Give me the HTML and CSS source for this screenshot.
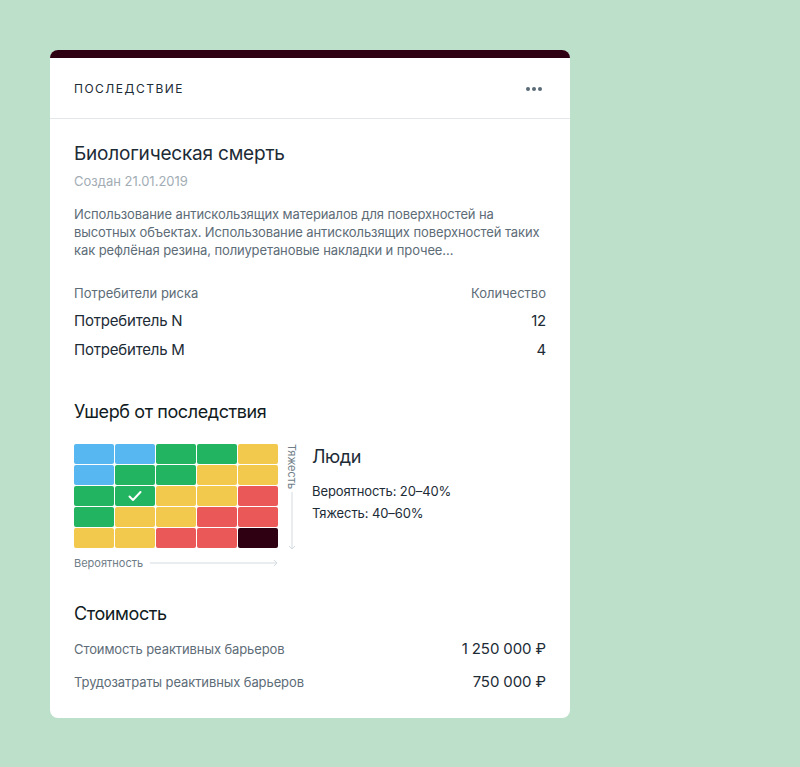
FILE: index.html
```html
<!DOCTYPE html>
<html lang="ru">
<head>
    <meta charset="UTF-8">
    <title>Последствие</title>
    <link rel="stylesheet" href="styles.css">
</head>
<body>
    <div class="card">
        <div class="card-top"></div>
        <div class="card-header">
            <span class="card-label">Последствие</span>
            <span class="dots"><i></i><i></i><i></i></span>
        </div>

        <div class="card-body">
            <h1 class="title">Биологическая смерть</h1>
            <div class="created">Создан 21.01.2019</div>
            <p class="desc">Использование антискользящих материалов для поверхностей на высотных объектах. Использование антискользящих поверхностей таких как рефлёная резина, полиуретановые накладки и прочее...</p>

            <div class="consumers">
                <div class="row head">
                    <span>Потребители риска</span>
                    <span>Количество</span>
                </div>
                <div class="row">
                    <span>Потребитель N</span>
                    <span>12</span>
                </div>
                <div class="row">
                    <span>Потребитель M</span>
                    <span>4</span>
                </div>
            </div>

            <h2 class="subtitle">Ушерб от последствия</h2>
            <div class="damage">
                <div class="matrix-wrap">
                    <div class="matrix-row">
                        <div class="matrix">
                            <div class="c blue"></div><div class="c blue"></div><div class="c green"></div><div class="c green"></div><div class="c yellow"></div>
                            <div class="c blue"></div><div class="c green"></div><div class="c green"></div><div class="c yellow"></div><div class="c yellow"></div>
                            <div class="c green"></div><div class="c green checked"><svg width="14" height="12" viewBox="0 0 14 12"><path d="M1.5 6.5 L5 10 L12.5 2" fill="none" stroke="#fff" stroke-width="2" stroke-linecap="round" stroke-linejoin="round"/></svg></div><div class="c yellow"></div><div class="c yellow"></div><div class="c red"></div>
                            <div class="c green"></div><div class="c yellow"></div><div class="c yellow"></div><div class="c red"></div><div class="c red"></div>
                            <div class="c yellow"></div><div class="c yellow"></div><div class="c red"></div><div class="c red"></div><div class="c dark"></div>
                        </div>
                        <div class="axis-y">
                            <span class="axis-y-label">Тяжесть</span>
                            <svg class="axis-y-arrow" width="8" height="58" viewBox="0 0 8 58"><path d="M4 0 V57 M1 54 L4 57 L7 54" fill="none" stroke="#d3dbe1" stroke-width="1"/></svg>
                        </div>
                    </div>
                    <div class="axis-x">
                        <span>Вероятность</span>
                        <svg class="axis-x-arrow" width="128" height="8" viewBox="0 0 128 8"><path d="M0 4 H127 M124 1 L127 4 L124 7" fill="none" stroke="#d3dbe1" stroke-width="1"/></svg>
                    </div>
                </div>
                <div class="people">
                    <div class="people-title">Люди</div>
                    <div class="people-line">Вероятность: 20–40%</div>
                    <div class="people-line">Тяжесть: 40–60%</div>
                </div>
            </div>

            <h2 class="subtitle cost-title">Стоимость</h2>
            <div class="cost">
                <div class="cost-row">
                    <span>Стоимость реактивных барьеров</span>
                    <span class="sum">1 250 000 ₽</span>
                </div>
                <div class="cost-row">
                    <span>Трудозатраты реактивных барьеров</span>
                    <span class="sum">750 000 ₽</span>
                </div>
            </div>
        </div>
    </div>
</body>
</html>
```

FILE: styles.css
```css
/* Общие стили */
body {
    margin: 0;
    background-color: #bde0cb;
    font-family: Inter, "Noto Sans", sans-serif;
    color: #1c2b36;
    min-height: 767px;
}

.card {
    width: 520px;
    margin: 50px 0 0 50px;
    background-color: #fff;
    border-radius: 8px;
    overflow: hidden;
}

.card-top {
    height: 8px;
    background-color: #2e0011;
}

/* Шапка карточки */
.card-header {
    height: 60px;
    padding: 0 24px;
    display: flex;
    align-items: center;
    justify-content: space-between;
    border-bottom: 1px solid #e3e7ea;
}

.card-label {
    font-size: 12px;
    letter-spacing: 1.5px;
    text-transform: uppercase;
    color: #1c2b36;
    padding-top: 1px;
}

.dots {
    display: flex;
    gap: 2px;
    margin-right: 4px;
    padding-top: 1px;
}

.dots i {
    width: 4px;
    height: 4px;
    border-radius: 50%;
    background-color: #5a6b78;
}

/* Содержимое */
.card-body {
    padding: 23px 24px 20px;
}

.title {
    margin: 0;
    font-size: 19px;
    font-weight: 400;
    line-height: 24px;
    letter-spacing: -0.2px;
}

.created {
    margin-top: 7px;
    font-size: 13px;
    line-height: 16px;
    color: #a3adb5;
}

.desc {
    margin: 16px 0 0;
    font-size: 13px;
    line-height: 18px;
    letter-spacing: -0.1px;
    color: #5d6c77;
}

.consumers {
    margin-top: 26px;
}

.row {
    display: flex;
    justify-content: space-between;
    font-size: 15px;
    line-height: 29px;
    letter-spacing: -0.2px;
}

.row.head {
    font-size: 13px;
    line-height: 16px;
    letter-spacing: 0;
    color: #5d6c77;
    margin-bottom: 5px;
}

.subtitle {
    margin: 36px 0 0;
    font-size: 18px;
    font-weight: 400;
    line-height: 24px;
    letter-spacing: -0.4px;
    color: #111b22;
}

/* Матрица ущерба */
.damage {
    display: flex;
    margin-top: 20px;
}

.matrix-row {
    display: flex;
}

.matrix {
    display: grid;
    grid-template-columns: repeat(5, 40px);
    grid-auto-rows: 20px;
    gap: 1px;
    width: 204px;
}

.c {
    border-radius: 2px;
    display: flex;
    align-items: center;
    justify-content: center;
}

.blue { background-color: #57b8f1; }
.green { background-color: #23b462; }
.yellow { background-color: #f2c94c; }
.red { background-color: #eb5858; }
.dark { background-color: #2e0011; }

.axis-y {
    width: 28px;
    display: flex;
    flex-direction: column;
    align-items: center;
}

.axis-y-label {
    writing-mode: vertical-rl;
    font-size: 11px;
    color: #6f7d87;
    line-height: 12px;
}

.axis-y-arrow {
    margin-top: 3px;
}

.axis-x {
    display: flex;
    align-items: center;
    justify-content: space-between;
    width: 204px;
    margin-top: 5px;
    font-size: 11px;
    color: #6f7d87;
    line-height: 16px;
}

.people {
    margin-left: 6px;
}

.people-title {
    font-size: 18px;
    line-height: 24px;
    letter-spacing: -0.4px;
    margin-top: 1px;
}

.people-line {
    font-size: 13px;
    line-height: 22px;
    letter-spacing: -0.1px;
    color: #1c2b36;
}

.people-title + .people-line {
    margin-top: 11px;
}

/* Стоимость */
.cost-title {
    margin-top: 31px;
}

.cost {
    margin-top: 6px;
}

.cost-row {
    display: flex;
    justify-content: space-between;
    align-items: center;
    font-size: 13px;
    letter-spacing: -0.1px;
    color: #5d6c77;
    height: 33px;
}

.cost-row .sum {
    font-size: 15px;
    color: #1c2b36;
}
```
